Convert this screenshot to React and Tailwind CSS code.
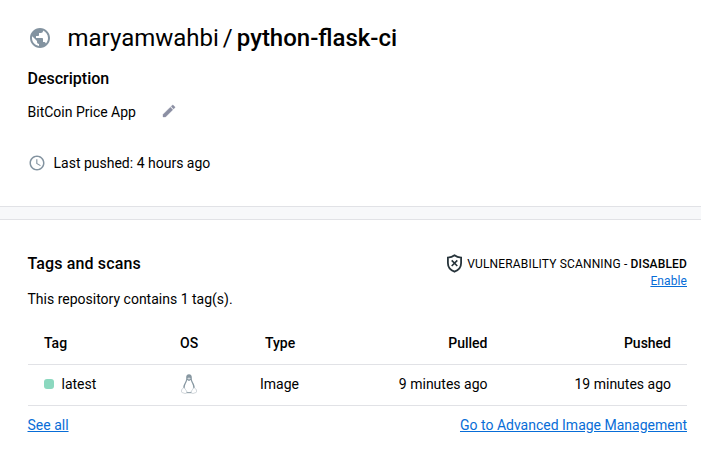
const font = "font-['Roboto','Liberation_Sans',sans-serif]";

function Globe() {
  return (
    <svg className="size-6 text-[#8393a0]" viewBox="0 0 24 24" fill="currentColor">
      <path d="M12 2C6.48 2 2 6.48 2 12s4.48 10 10 10 10-4.48 10-10S17.52 2 12 2zm-1 17.93c-3.95-.49-7-3.85-7-7.93 0-.62.08-1.21.21-1.79L9 15v1c0 1.1.9 2 2 2v1.93zm6.9-2.54c-.26-.81-1-1.39-1.9-1.39h-1v-3c0-.55-.45-1-1-1H8v-2h2c.55 0 1-.45 1-1V7h2c1.1 0 2-.9 2-2v-.41c2.93 1.19 5 4.06 5 7.41 0 2.08-.8 3.97-2.1 5.39z" />
    </svg>
  );
}

function Pencil() {
  return (
    <svg className="size-4 text-[#8b8fa3]" viewBox="0 0 24 24" fill="currentColor" stroke="currentColor" strokeWidth=".5">
      <path d="M3 17.25V21h3.75L17.81 9.94l-3.75-3.75L3 17.25zM20.71 7.04a1 1 0 0 0 0-1.41l-2.34-2.34a1 1 0 0 0-1.41 0l-1.83 1.83 3.75 3.75 1.83-1.83z" />
    </svg>
  );
}

function Clock() {
  return (
    <svg className="size-[18px] text-[#8393a0]" viewBox="0 0 24 24" fill="currentColor">
      <path d="M11.99 2C6.47 2 2 6.48 2 12s4.47 10 9.99 10C17.52 22 22 17.52 22 12S17.52 2 11.99 2zM12 20c-4.42 0-8-3.58-8-8s3.58-8 8-8 8 3.58 8 8-3.58 8-8 8zm.5-13H11v6l5.25 3.15.75-1.23-4.5-2.67z" />
    </svg>
  );
}

function Shield() {
  return (
    <svg className="h-[19px] w-[17px] text-[#27343b]" viewBox="0 0 17 19" fill="none" stroke="currentColor" strokeWidth="1.8">
      <path d="M8.5 1.3C6.8 2.7 4.2 3.5 1.9 3.6V9c0 4.200 2.700 7.200 6.600 8.700 3.900-1.500 6.600-4.500 6.600-8.700V3.600C12.800 3.500 10.200 2.700 8.500 1.300z" />
      <path d="M5.700 6.400l5.600 5.600M11.300 6.400l-5.600 5.600" strokeWidth="1.6" />
    </svg>
  );
}

function Penguin() {
  return (
    <svg className="h-5 w-4" viewBox="0 0 16 20" fill="none">
      <path d="M8 .2C5.900.2 5.100 1.700 5.200 3.600c.1 2.200-.1 3-1.200 4.800C2.800 10.300 2.200 12 2.200 14.500L4 18.500h8l1.800-4c0-2.500-.7-4.300-1.800-6.100-1.100-1.800-1.200-2.700-1.200-4.800C10.800 1.700 10.100.2 8 .2z" fill="#8797a1" />
      <path d="M6.200 6.100C5.900 8.300 3.700 10.700 3.700 14c0 2.500 1.600 4.200 4.300 4.200s4.300-1.700 4.300-4.200c0-3.300-2.200-5.700-2.500-7.900L8 7z" fill="#fff" />
      <path d="M4.800 18.700h6.400" stroke="#8797a1" strokeWidth=".9" />
      <path d="M6.100 4.200L8 3.500l1.900.7L8 5.800z" fill="#d5dce0" />
      <path d="M2.300 13.900c.9-.5 1.700.6 2.200 1.600.6 1 1.500 1.700 1.300 2.700-.3 1.300-1.900 1.500-3 .9-.8-.4-2.200-.5-2.400-1.200-.2-.8.3-1.200.3-1.900 0-.9 1-1.400 1.600-2.100zM13.700 13.900c-.9-.5-1.700.6-2.200 1.600-.6 1-1.500 1.700-1.300 2.700.3 1.300 1.900 1.500 3 .9.800-.4 2.200-.5 2.400-1.200.2-.8-.3-1.200-.3-1.900 0-.9-1-1.400-1.600-2.100z" fill="#fff" stroke="#b7c2c9" strokeWidth=".7" />
    </svg>
  );
}

const columns = "grid grid-cols-[110px_86px_96px_184px_184px] items-center text-sm";

export default function App() {
  return (
    <main className={`${font} h-[467px] w-[701px] overflow-hidden bg-white text-sm text-black`}>
      <header className="h-[206px] pl-[27.5px] pt-5">
        <div className="flex h-9 items-center">
          <Globe />
          <h1 className="ml-4 flex text-2xl">
            <span>maryamwahbi</span>
            <span className="mx-[4px]">/</span>
            <span className="font-medium">python-flask-ci</span>
          </h1>
        </div>
        <h2 className="mt-[11px] text-base leading-6 font-medium">Description</h2>
        <div className="mt-[11px] flex h-5 items-center">
          <p>BitCoin Price App</p>
          <span className="mb-[2px] ml-[25px]"><Pencil /></span>
        </div>
        <div className="mt-[31px] flex h-5 items-center gap-2">
          <Clock />
          <p>Last pushed: 4 hours ago</p>
        </div>
      </header>
      <div className="h-[14px] border-y border-[#e1e2e6] bg-[#f7f8fa]" />
      <section className="pl-[27.5px] pr-[14px] pt-8">
        <div className="flex h-[37px] justify-between">
          <h2 className="text-base leading-6 font-medium tracking-[0.13px]">Tags and scans</h2>
          <div className="flex flex-col items-end text-xs">
            <p className="flex h-[23px] items-center"><Shield /><span className="ml-1 tracking-[0.16px]">VULNERABILITY SCANNING - <span className="font-medium">DISABLED</span></span></p>
            <a className="leading-3 tracking-[0.1px] text-[#086dd7] underline">Enable</a>
          </div>
        </div>
        <p className="h-5 leading-5">This repository contains 1 tag(s).</p>
        <div className="mt-[13px]">
          <div className={`${columns} h-[43px] border-b border-[#e1e2e6] font-medium`}>
            <span className="pl-[16.5px]">Tag</span>
            <span className="pl-[42.5px]">OS</span>
            <span className="pl-[41.5px]">Type</span>
            <span className="pr-[16px] text-right">Pulled</span>
            <span className="pr-[16.5px] text-right">Pushed</span>
          </div>
          <div className={`${columns} h-[41px] border-b border-[#e1e2e6] pb-[2px]`}>
            <span className="flex items-center gap-2 pl-4"><i className="size-[10px] rounded-[3px] bg-[#8bd8bf]" />latest</span>
            <span className="pl-[43px]"><Penguin /></span>
            <span className="pl-[36.5px]">Image</span>
            <span className="pr-[16px] text-right">9 minutes ago</span>
            <span className="pr-[16.5px] text-right">19 minutes ago</span>
          </div>
        </div>
        <div className="mt-[9px] flex justify-between leading-5 text-[#086dd7]">
          <a className="underline">See all</a>
          <a className="underline">Go to Advanced Image Management</a>
        </div>
      </section>
    </main>
  );
}
